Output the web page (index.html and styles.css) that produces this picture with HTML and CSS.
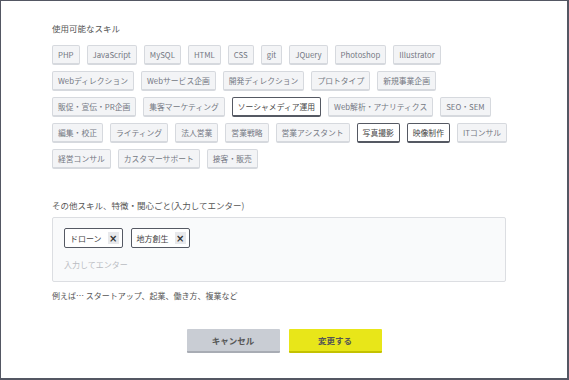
FILE: index.html
```html
<!doctype html>
<html lang="ja">
  <head>
    <meta charset="utf-8">
    <title>スキル編集</title>
    <link rel="stylesheet" href="styles.css">
  </head>
  <body>
    <div class="frame">
      <section class="skills">
        <h2 class="label">使用可能なスキル</h2>
        <div class="tags">
          <ul class="tag-row">
            <li class="tag">PHP</li>
            <li class="tag">JavaScript</li>
            <li class="tag">MySQL</li>
            <li class="tag">HTML</li>
            <li class="tag">CSS</li>
            <li class="tag">git</li>
            <li class="tag">JQuery</li>
            <li class="tag">Photoshop</li>
            <li class="tag">Illustrator</li>
          </ul>
          <ul class="tag-row">
            <li class="tag">Webディレクション</li>
            <li class="tag">Webサービス企画</li>
            <li class="tag">開発ディレクション</li>
            <li class="tag">プロトタイプ</li>
            <li class="tag">新規事業企画</li>
          </ul>
          <ul class="tag-row">
            <li class="tag">販促・宣伝・PR企画</li>
            <li class="tag">集客マーケティング</li>
            <li class="tag selected">ソーシャメディア運用</li>
            <li class="tag">Web解析・アナリティクス</li>
            <li class="tag">SEO・SEM</li>
          </ul>
          <ul class="tag-row">
            <li class="tag">編集・校正</li>
            <li class="tag">ライティング</li>
            <li class="tag">法人営業</li>
            <li class="tag">営業戦略</li>
            <li class="tag">営業アシスタント</li>
            <li class="tag selected">写真撮影</li>
            <li class="tag selected">映像制作</li>
            <li class="tag">ITコンサル</li>
          </ul>
          <ul class="tag-row">
            <li class="tag">経営コンサル</li>
            <li class="tag">カスタマーサポート</li>
            <li class="tag">接客・販売</li>
          </ul>
        </div>
      </section>

      <section class="other">
        <h2 class="label">その他スキル、特徴・関心ごと(入力してエンター)</h2>
        <div class="tag-input">
          <div class="chips">
            <span class="chip">ドローン<span class="remove">×</span></span>
            <span class="chip">地方創生<span class="remove">×</span></span>
          </div>
          <span class="placeholder">入力してエンター</span>
        </div>
        <p class="hint">例えば… スタートアップ、起業、働き方、複業など</p>
      </section>

      <div class="actions">
        <button class="btn cancel">キャンセル</button>
        <button class="btn submit">変更する</button>
      </div>
    </div>
  </body>
</html>
```

FILE: styles.css
```css
html, body {
  margin: 0;
  padding: 0;
}
body {
  font-family: "Noto Sans CJK JP", "Noto Sans", sans-serif;
  color: #555;
  background: #fff;
}
.frame {
  box-sizing: border-box;
  width: 569px;
  height: 380px;
  border: solid #545763;
  border-width: 1px 2px 2px 1px;
  padding: 20px 0 0 51px;
}
.label {
  margin: 0;
  font-size: 8.5px;
  font-weight: normal;
  line-height: 14px;
  color: #555;
}
.tags {
  margin-top: 10px;
  display: flex;
  flex-direction: column;
  gap: 6px;
}
.tag-row {
  list-style: none;
  margin: 0;
  padding: 0;
  display: flex;
  gap: 7px;
}
.tag {
  box-sizing: border-box;
  height: 20px;
  padding: 0 5px;
  display: flex;
  align-items: center;
  font-size: 7.8px;
  color: #737883;
  background: #f3f4f6;
  border: 1px solid #d6d9de;
  border-bottom-width: 2px;
  border-radius: 2px;
  white-space: nowrap;
}
.tag.selected {
  background: #fff;
  color: #444;
  border: 1px solid #555963;
  border-bottom-width: 2px;
}
.other {
  margin-top: 29px;
}
.tag-input {
  box-sizing: border-box;
  width: 454px;
  height: 65px;
  margin-top: 5px;
  padding: 10px 11px;
  background: #f9fafb;
  border: 1px solid #dcdee2;
  border-radius: 2px;
}
.chips {
  display: flex;
  gap: 8px;
}
.chip {
  box-sizing: border-box;
  height: 20px;
  padding: 0 3px 0 5px;
  display: flex;
  align-items: center;
  gap: 6px;
  font-size: 8px;
  color: #444;
  background: #fff;
  border: 1px solid #555963;
  border-radius: 2px;
}
.remove {
  width: 11px;
  height: 12px;
  display: flex;
  align-items: center;
  justify-content: center;
  font-family: "DejaVu Sans", sans-serif;
  font-size: 10px;
  font-weight: bold;
  color: #333;
  background: #e8e9ec;
}
.placeholder {
  display: block;
  margin-top: 11px;
  font-size: 8px;
  color: #b9bcc2;
}
.hint {
  margin: 7px 0 0;
  font-size: 8px;
  line-height: 14px;
  color: #555;
}
.actions {
  display: flex;
  justify-content: center;
  gap: 9px;
  margin: 26px 0 0 -51px;
}
.btn {
  box-sizing: border-box;
  width: 93px;
  height: 24px;
  border: 0;
  border-bottom: 2px solid;
  border-radius: 1px;
  font-family: inherit;
  font-size: 8.5px;
  font-weight: bold;
  color: #555;
}
.cancel {
  background: #c9cdd4;
  border-bottom-color: #a8acb4;
}
.submit {
  background: #e8e619;
  border-bottom-color: #c4c200;
}
```
